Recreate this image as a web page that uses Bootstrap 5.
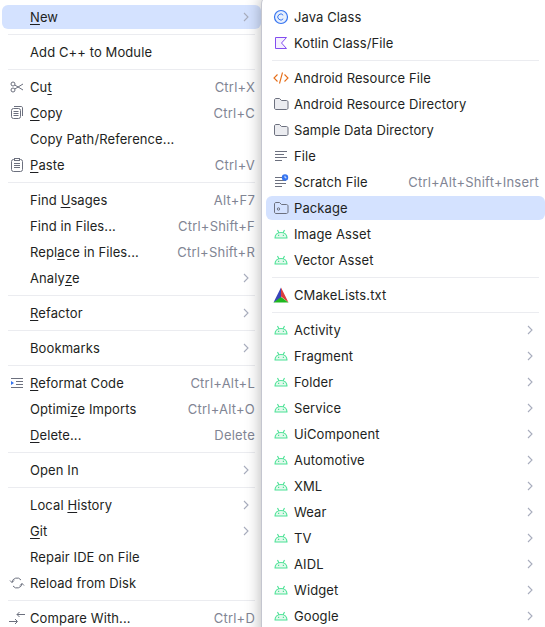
<!DOCTYPE html>
<html lang="en">
<head>
  <meta charset="UTF-8">
  <title>New menu</title>
  <link href="https://cdn.jsdelivr.net/npm/bootstrap@5.3.2/dist/css/bootstrap.min.css" rel="stylesheet">
  <style>
    body {
      background-color: #fff;
      font-family: Inter, "Liberation Sans", sans-serif;
      font-size: 13px;
      color: #1e1f22;
      height: 627px;
      overflow: hidden;
    }
    .ide-wrap { height: 640px; }
    .ide-menu {
      position: static;
      display: flex;
      flex-direction: column;
      min-width: 0;
      margin: 0;
      padding: 4px 0 0;
      border: 0;
      border-radius: 0;
      background: #fff;
      font-size: 13px;
      color: #1e1f22;
    }
    .ide-left { width: 261px; flex: none; }
    .ide-right {
      position: relative;
      flex: 1 1 auto;
      margin-top: -4px;
      padding-top: 8px;
      border-left: 1px solid #c4c6cf;
      border-top-left-radius: 8px;
      box-shadow: 0 0 16px rgba(0, 0, 0, .3);
    }
    .ide-row {
      flex: none;
      height: 24px;
      margin: 1px 0 1px 2px;
      padding: 0 6px 0 28px;
      display: flex;
      align-items: center;
      border-radius: 6px;
      color: #1e1f22;
      letter-spacing: .1px;
      line-height: 24px;
      white-space: nowrap;
    }
    .ide-right .ide-row { margin-left: 4px; }
    .ide-row.is-active { background: #d4e2ff; }
    .ide-row u { text-underline-offset: 2px; }
    .ide-ico {
      width: 16px;
      height: 16px;
      margin-left: -21px;
      margin-right: 5px;
      flex: none;
    }
    .ide-key { margin-left: auto; color: #818594; letter-spacing: .22px; }
    .ide-arrow { margin-left: auto; margin-right: 5px; width: 8px; height: 10px; flex: none; }
    .ide-line {
      flex: none;
      height: 1px;
      margin: 4px 6px 4px 8px;
      background: #ebecf0;
      opacity: 1;
      border: 0;
    }
    .ide-right .ide-line { margin-left: 10px; }
    .ln { fill: none; stroke: #6c707e; stroke-width: 1; }
    .fold { fill: #ebecf0; stroke: #6c707e; stroke-width: 1; stroke-linejoin: round; }
    .droid { fill: #e3f9ed; stroke: #4be295; stroke-width: 1.100; stroke-linejoin: round; }
  </style>
</head>
<body>

<svg width="0" height="0" class="position-absolute">
  <symbol id="i-droid" viewBox="0 0 16 16">
    <path class="droid" d="M2 12c0-3.300 2.600-5.500 6-5.500s6 2.200 6 5.500zM4.500 4l1.500 2.900M11.500 4L10 6.900"/>
    <path d="M5 8.800h1.200V10H5zM9.800 8.800H11V10H9.800z" fill="#4be295"/>
  </symbol>
  <symbol id="i-folder" viewBox="0 0 16 16">
    <path class="fold" d="M1.500 4c0-.8.600-1.500 1.500-1.500h3.500l2 2h5c.8 0 1.500.7 1.500 1.500v6c0 .8-.7 1.500-1.500 1.500H3c-.9 0-1.500-.7-1.500-1.500z"/>
  </symbol>
  <symbol id="i-arrow" viewBox="0 0 8 10">
    <path d="M2 1l4 4-4 4" fill="none" stroke="#a8adbd" stroke-width="1.100"/>
  </symbol>
</svg>

<div class="d-flex ide-wrap">
  <div class="dropdown-menu ide-menu ide-left">
    <div class="ide-row is-active"><span><u>N</u>ew</span><svg class="ide-arrow"><use href="#i-arrow"/></svg></div>
    <hr class="ide-line">
    <div class="ide-row">Add C++ to Module</div>
    <hr class="ide-line">
    <div class="ide-row">
      <svg class="ide-ico" viewBox="0 0 16 16"><circle class="ln" cx="4" cy="5" r="2"/><circle class="ln" cx="4" cy="11" r="2"/><path class="ln" d="M5.800 6L14 11M5.800 10L14 5"/></svg>
      <span>Cu<u>t</u></span><span class="ide-key">Ctrl+X</span>
    </div>
    <div class="ide-row">
      <svg class="ide-ico" viewBox="0 0 16 16"><rect class="ln" x="2.500" y="3.500" width="9" height="10" rx="2"/><path class="ln" d="M4.500 6.500h5M4.500 8.500h5M4.500 10.500h5M5 1.500h7c1 0 1.500.5 1.500 1.500v8"/></svg>
      <span><u>C</u>opy</span><span class="ide-key">Ctrl+C</span>
    </div>
    <div class="ide-row">Copy Path/Reference...</div>
    <div class="ide-row">
      <svg class="ide-ico" viewBox="0 0 16 16"><rect class="ln" x="2.500" y="2.500" width="11" height="12" rx="2"/><rect x="5.500" y="1.500" width="5" height="2" fill="#fff" stroke="#6c707e"/><path class="ln" d="M5 6.500h6M5 8.500h6M5 10.500h6"/></svg>
      <span><u>P</u>aste</span><span class="ide-key">Ctrl+V</span>
    </div>
    <hr class="ide-line">
    <div class="ide-row"><span>Find <u>U</u>sages</span><span class="ide-key">Alt+F7</span></div>
    <div class="ide-row"><span>Find in Files...</span><span class="ide-key">Ctrl+Shift+F</span></div>
    <div class="ide-row"><span>Repl<u>a</u>ce in Files...</span><span class="ide-key">Ctrl+Shift+R</span></div>
    <div class="ide-row"><span>Analy<u>z</u>e</span><svg class="ide-arrow"><use href="#i-arrow"/></svg></div>
    <hr class="ide-line">
    <div class="ide-row"><span><u>R</u>efactor</span><svg class="ide-arrow"><use href="#i-arrow"/></svg></div>
    <hr class="ide-line">
    <div class="ide-row"><span>Bookmarks</span><svg class="ide-arrow"><use href="#i-arrow"/></svg></div>
    <hr class="ide-line">
    <div class="ide-row">
      <svg class="ide-ico" viewBox="0 0 16 16"><path class="ln" d="M2 3.500h12M7 6.500h7M7 9.500h7M2 12.500h12"/><path d="M2 6l3 2-3 2z" fill="#3574f0"/></svg>
      <span><u>R</u>eformat Code</span><span class="ide-key">Ctrl+Alt+L</span>
    </div>
    <div class="ide-row"><span>Optimi<u>z</u>e Imports</span><span class="ide-key">Ctrl+Alt+O</span></div>
    <div class="ide-row"><span><u>D</u>elete...</span><span class="ide-key">Delete</span></div>
    <hr class="ide-line">
    <div class="ide-row"><span>Open In</span><svg class="ide-arrow"><use href="#i-arrow"/></svg></div>
    <hr class="ide-line">
    <div class="ide-row"><span>Local <u>H</u>istory</span><svg class="ide-arrow"><use href="#i-arrow"/></svg></div>
    <div class="ide-row"><span><u>G</u>it</span><svg class="ide-arrow"><use href="#i-arrow"/></svg></div>
    <div class="ide-row">Repair IDE on File</div>
    <div class="ide-row">
      <svg class="ide-ico" viewBox="0 0 16 16"><path class="ln" d="M3 7.500a5 5 0 0 1 9-2.500M13 8.500a5 5 0 0 1-9 2.500M1 5.500l2 2 2-2M11 10.500l2-2 2 2"/></svg>
      <span>Reload from Disk</span>
    </div>
    <hr class="ide-line">
    <div class="ide-row">
      <svg class="ide-ico" viewBox="0 0 16 16"><path class="ln" d="M0 11.500h8M6 9l2.500 2.500L6 14M16 4.500H8M10.500 2L8 4.500 10.500 7"/></svg>
      <span>Compare With...</span><span class="ide-key">Ctrl+D</span>
    </div>
  </div>

  <div class="dropdown-menu ide-menu ide-right">
    <div class="ide-row">
      <svg class="ide-ico" viewBox="0 0 16 16"><circle cx="8" cy="8" r="6.500" fill="#e7effd" stroke="#3574f0" stroke-width="1.200"/><path d="M10.200 6.200A3 3 0 1 0 10.200 9.800" fill="none" stroke="#3574f0"/></svg>
      Java Class
    </div>
    <div class="ide-row">
      <svg class="ide-ico" viewBox="0 0 16 16"><path d="M2.500 2.500h11L8.500 8l5 5.500h-11z" fill="#f5f0fe" stroke="#834df0" stroke-linejoin="round"/></svg>
      Kotlin Class/File
    </div>
    <hr class="ide-line">
    <div class="ide-row">
      <svg class="ide-ico" viewBox="0 0 16 16"><path d="M4.500 4.500L1 8l3.500 3.500M11.500 4.500L15 8l-3.500 3.500M9.500 2.500l-3 11" fill="none" stroke="#e66d17" stroke-width="1.100"/></svg>
      Android Resource File
    </div>
    <div class="ide-row"><svg class="ide-ico"><use href="#i-folder"/></svg>Android Resource Directory</div>
    <div class="ide-row"><svg class="ide-ico"><use href="#i-folder"/></svg>Sample Data Directory</div>
    <div class="ide-row">
      <svg class="ide-ico" viewBox="0 0 16 16"><path class="ln" d="M2 3.500h12M2 6.500h9M2 9.500h12M2 12.500h7"/></svg>
      File
    </div>
    <div class="ide-row">
      <svg class="ide-ico" viewBox="0 0 16 16"><path class="ln" d="M2 3.500h7M2 6.500h11M2 9.500h11M2 12.500h7"/><circle cx="12" cy="3.500" r="3.200" fill="#3574f0"/><path d="M12 1.800v2h1.500" fill="none" stroke="#fff" stroke-width=".8"/></svg>
      <span>Scratch File</span><span class="ide-key">Ctrl+Alt+Shift+Insert</span>
    </div>
    <div class="ide-row is-active">
      <svg class="ide-ico" viewBox="0 0 16 16"><path class="ln" d="M1.500 4c0-.8.600-1.500 1.500-1.500h3.500l2 2h5c.8 0 1.500.7 1.500 1.500v6c0 .8-.7 1.500-1.500 1.500H3c-.9 0-1.500-.7-1.500-1.500z"/><circle class="ln" cx="5.500" cy="9" r="1.200"/></svg>
      Package
    </div>
    <div class="ide-row"><svg class="ide-ico"><use href="#i-droid"/></svg>Image Asset</div>
    <div class="ide-row"><svg class="ide-ico"><use href="#i-droid"/></svg>Vector Asset</div>
    <hr class="ide-line">
    <div class="ide-row">
      <svg class="ide-ico" viewBox="0 0 16 16"><path d="M8 .5L.500 15.500l7.500-4z" fill="#3a45b8"/><path d="M8 .5l7.500 15-7.500-6z" fill="#dc3d3d"/><path d="M.500 15.500L8 10l7.500 5.500z" fill="#1fb81f"/></svg>
      CMakeLists.txt
    </div>
    <hr class="ide-line">
    <div class="ide-row"><svg class="ide-ico"><use href="#i-droid"/></svg><span>Activity</span><svg class="ide-arrow"><use href="#i-arrow"/></svg></div>
    <div class="ide-row"><svg class="ide-ico"><use href="#i-droid"/></svg><span>Fragment</span><svg class="ide-arrow"><use href="#i-arrow"/></svg></div>
    <div class="ide-row"><svg class="ide-ico"><use href="#i-droid"/></svg><span>Folder</span><svg class="ide-arrow"><use href="#i-arrow"/></svg></div>
    <div class="ide-row"><svg class="ide-ico"><use href="#i-droid"/></svg><span>Service</span><svg class="ide-arrow"><use href="#i-arrow"/></svg></div>
    <div class="ide-row"><svg class="ide-ico"><use href="#i-droid"/></svg><span>UiComponent</span><svg class="ide-arrow"><use href="#i-arrow"/></svg></div>
    <div class="ide-row"><svg class="ide-ico"><use href="#i-droid"/></svg><span>Automotive</span><svg class="ide-arrow"><use href="#i-arrow"/></svg></div>
    <div class="ide-row"><svg class="ide-ico"><use href="#i-droid"/></svg><span>XML</span><svg class="ide-arrow"><use href="#i-arrow"/></svg></div>
    <div class="ide-row"><svg class="ide-ico"><use href="#i-droid"/></svg><span>Wear</span><svg class="ide-arrow"><use href="#i-arrow"/></svg></div>
    <div class="ide-row"><svg class="ide-ico"><use href="#i-droid"/></svg><span>TV</span><svg class="ide-arrow"><use href="#i-arrow"/></svg></div>
    <div class="ide-row"><svg class="ide-ico"><use href="#i-droid"/></svg><span>AIDL</span><svg class="ide-arrow"><use href="#i-arrow"/></svg></div>
    <div class="ide-row"><svg class="ide-ico"><use href="#i-droid"/></svg><span>Widget</span><svg class="ide-arrow"><use href="#i-arrow"/></svg></div>
    <div class="ide-row"><svg class="ide-ico"><use href="#i-droid"/></svg><span>Google</span><svg class="ide-arrow"><use href="#i-arrow"/></svg></div>
  </div>
</div>

</body>
</html>
